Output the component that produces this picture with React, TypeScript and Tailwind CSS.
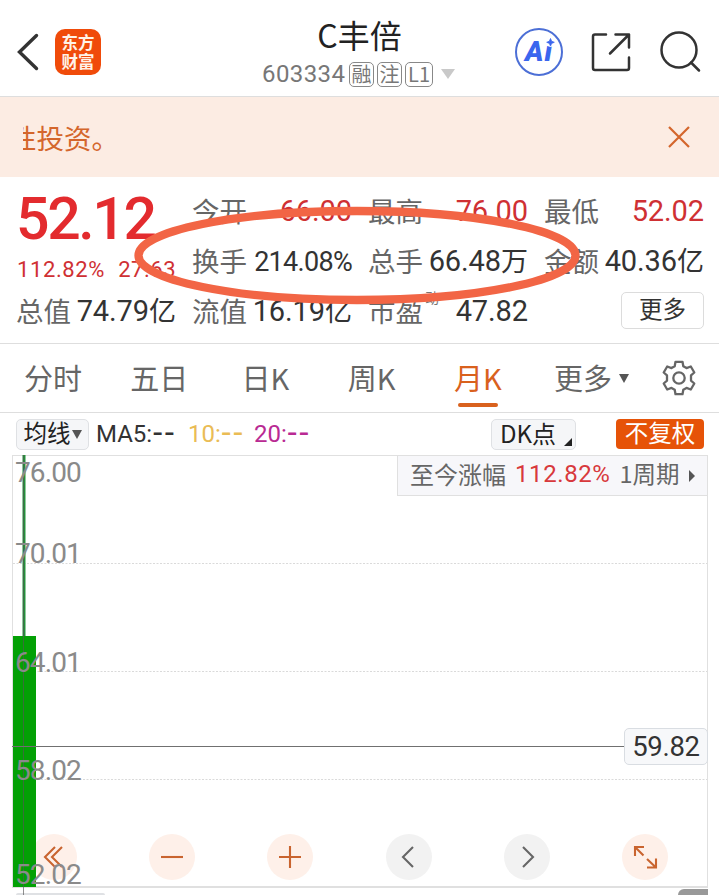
import { ReactNode } from 'react';
import clsx from 'clsx';

const tabs = ['分时', '五日', '日K', '周K', '月K'];

const axisLabels = [
  { value: '76.00', top: 'top-px' },
  { value: '70.01', top: 'top-[82px]' },
  { value: '64.01', top: 'top-[191px]' },
  { value: '58.02', top: 'top-[299px]' },
  { value: '52.02', top: 'top-[403px]' },
];

const num = "font-['Roboto','Noto_Sans_CJK_SC',sans-serif]";

function Cell({ label, children, sup }: { label: string; children: ReactNode; sup?: string }) {
  return (
    <div className="relative flex h-[50px] items-center justify-between whitespace-nowrap">
      <span className="-ml-px pb-px text-[27.5px] text-[#666]">{label}</span>
      {sup && <span className="absolute left-[56px] top-[2px] text-[14px] leading-[18px] text-[#777]">{sup}</span>}
      <span className={clsx(num, 'flex items-center pt-[2px]')}>{children}</span>
    </div>
  );
}

function Digits({ children, red, unit }: { children: string; red?: boolean; unit?: string }) {
  return (
    <>
      <span className={clsx('text-[29px] tracking-[-0.1px]', red ? 'text-[#cf3033]' : 'text-[#333]')}>{children}</span>
      {unit && <span className="text-[27px] text-[#333]">{unit}</span>}
    </>
  );
}

function StockTag({ children, wide }: { children: string; wide?: boolean }) {
  return (
    <span className={clsx('flex h-[25px] items-center justify-center rounded-[5px] border border-[#888] text-[20px] leading-none text-[#777]', wide ? 'w-[28px]' : 'w-[25px]')}>
      {children}
    </span>
  );
}

function Header() {
  return (
    <header className="flex h-[97px] shrink-0 items-center border-b border-[#dedede] pb-2">
      <svg className="ml-4 mt-[15px] h-10 w-6 shrink-0" viewBox="0 0 24 40" fill="none" stroke="#333" strokeWidth="3.4" strokeLinecap="round">
        <path d="M20.5 3.5 3.5 20l17 16.5" />
      </svg>
      <div className="ml-[15px] mt-[15px] flex h-[46px] w-[46px] shrink-0 flex-col items-center justify-center rounded-[10px] bg-[#f04b0a] text-[16.5px] font-bold leading-[19px] text-[#fff3e8]">
        <span>东方</span>
        <span>财富</span>
      </div>
      <div className="ml-[161px] mt-[14px] flex w-[193px] shrink-0 flex-col items-center">
        <h1 className="pl-[2px] text-[32px] leading-[38px] text-[#222]">C丰倍</h1>
        <div className="mt-[2px] flex h-[32px] w-full items-center">
          <span className={clsx(num, 'w-[87px] pt-[6px] text-[24px] tracking-[0.4px] text-[#777]')}>603334</span>
          <div className="flex gap-[3px] pt-[6px]">
            <StockTag>融</StockTag>
            <StockTag>注</StockTag>
            <StockTag wide>L1</StockTag>
          </div>
          <svg className="ml-auto mt-[6px] h-[10px] w-[14px]" viewBox="0 0 14 10"><path d="M0 0h14L7 10z" fill="#c9c9c9" /></svg>
        </div>
      </div>
      <div className="relative ml-[60px] mt-[15px] flex h-[48px] w-[48px] shrink-0 items-center justify-center rounded-full border-[2.5px] border-[#4c6fd6]">
        <span className="font-['Roboto',sans-serif] text-[28px] font-black italic leading-none tracking-[1px] text-[#3b66ee]">Ai</span>
        <svg className="absolute left-[27px] top-[6px] h-[11px] w-[12px]" viewBox="0 0 12 11">
          <circle cx="6.5" cy="6.3" r="4.7" fill="#fff" />
          <path d="M6.5 2.5 7.6 5.2 10.3 6.3 7.6 7.4 6.5 10.1 5.4 7.4 2.7 6.3 5.4 5.2z" fill="#3b66ee" stroke="#3b66ee" strokeWidth=".8" />
        </svg>
      </div>
      <svg className="ml-[28px] mt-[15px] h-[40px] w-[40px] shrink-0" viewBox="0 0 40 40" fill="none" stroke="#333" strokeWidth="2.5" strokeLinecap="round" strokeLinejoin="round">
        <path d="M15 2.5H4Q2 2.5 2 4.5V36Q2 38 4 38H36Q38 38 38 36V25.5M24.5 2.5H38V15.5M38 2.5 19 21.5" />
      </svg>
      <svg className="ml-[28px] mt-[15px] h-[42px] w-[42px] shrink-0" viewBox="0 0 42 42" fill="none" stroke="#333" strokeWidth="2.5" strokeLinecap="round">
        <circle cx="20" cy="19" r="17.5" />
        <path d="m32 31.5 8 8" />
      </svg>
    </header>
  );
}

function Quote() {
  return (
    <section className="relative grid h-[167px] shrink-0 grid-cols-[repeat(4,159px)] gap-x-[17px] border-b border-[#dedede] pl-[17px] pt-[9px]">
      <div className={num}>
        <div className="-ml-px h-[65px] pt-px text-[59px] font-medium leading-[64px] tracking-[-2.4px] text-[#e32b2e]">52.12</div>
        <div className="mt-[3px] flex h-[32px] items-center justify-between pb-[2px] text-[22px] text-[#cf3033]">
          <span className="tracking-[0.6px]">112.82%</span>
          <span className="tracking-[0.5px]">27.63</span>
        </div>
        <div className="font-['Noto_Sans_CJK_SC',sans-serif]">
          <Cell label="总值"><Digits unit="亿">74.79</Digits></Cell>
        </div>
      </div>
      <div>
        <Cell label="今开"><Digits red>66.00</Digits></Cell>
        <Cell label="换手"><span className="text-[27px] tracking-[-0.7px] text-[#333]">214.08%</span></Cell>
        <Cell label="流值"><Digits unit="亿">16.19</Digits></Cell>
      </div>
      <div>
        <Cell label="最高"><Digits red>76.00</Digits></Cell>
        <Cell label="总手"><Digits unit="万">66.48</Digits></Cell>
        <Cell label="市盈" sup="动"><Digits>47.82</Digits></Cell>
      </div>
      <div>
        <Cell label="最低"><Digits red>52.02</Digits></Cell>
        <Cell label="金额"><Digits unit="亿">40.36</Digits></Cell>
        <button className="ml-auto mt-[6px] flex h-[37px] w-[83px] items-center justify-center rounded-[5px] border border-[#dcdcdc] pb-[3px] text-[23.5px] leading-none text-[#333]">更多</button>
      </div>
      <svg className="pointer-events-none absolute left-[130px] top-[26px] h-[106px] w-[454px]" viewBox="0 0 454 106" fill="none">
        <ellipse cx="227" cy="52.5" rx="218.5" ry="44.5" stroke="#f26545" strokeWidth="8.3" />
      </svg>
    </section>
  );
}

function Tabs() {
  return (
    <nav className="flex h-[69px] shrink-0 items-center border-b border-[#dedede] text-[29px] text-[#666]">
      {tabs.map((t) => (
        <div key={t} className={clsx('relative flex h-full w-[106.2px] items-center justify-center', t === '月K' && 'text-[#d9611d]')}>
          {t}
          {t === '月K' && <span className="absolute bottom-[5px] h-1 w-10 rounded-full bg-[#d9611d]" />}
        </div>
      ))}
      <div className="ml-[23px] flex items-center gap-[7px]">
        更多
        <svg className="h-[9px] w-[10px]" viewBox="0 0 10 9"><path d="M0 0h10L5 9z" fill="#555" /></svg>
      </div>
      <svg className="ml-[32px] h-[36px] w-[36px]" viewBox="0 0 36 36" fill="none" stroke="#666" strokeWidth="2.3" strokeLinejoin="round">
        <path d="M14.5 1.8h7l.8 4.4 3.2 1.9 4.3-1.6 3.5 6-3.3 2.9v5.2l3.3 2.9-3.5 6-4.3-1.6-3.2 1.9-.8 4.4h-7l-.8-4.4-3.2-1.9-4.3 1.6-3.5-6L6 20.6v-5.2l-3.3-2.9 3.5-6 4.3 1.6 3.2-1.9z" />
        <circle cx="18" cy="18" r="5.7" />
      </svg>
    </nav>
  );
}

function Dashes() {
  return <span className="font-['DejaVu_Sans',sans-serif] text-[30px] leading-[20px] tracking-[1px]">--</span>;
}

function Indicators() {
  return (
    <div className="flex h-[42px] shrink-0 items-center pl-4 pr-[15px] text-[24px] leading-none">
      <div className="flex h-[31px] w-[73px] items-center justify-center rounded-[5px] border border-[#dfe1e4] bg-[#f5f6f8] pb-[3px] text-[23.5px] text-[#222]">
        均线
        <svg className="ml-px mt-[3px] h-[9px] w-[10px]" viewBox="0 0 10 9"><path d="M0 0h10L5 9z" fill="#555" /></svg>
      </div>
      <div className={clsx(num, 'ml-[7px] flex whitespace-nowrap')}>
        <span className="w-[92px] text-[#333]">MA5:<Dashes /></span>
        <span className="w-[66px] text-[#eabc55]">10:<Dashes /></span>
        <span className="text-[#b92a93]">20:<Dashes /></span>
      </div>
      <div className="relative ml-auto flex h-[31px] w-[85px] items-center rounded-[5px] border border-[#dfe1e4] bg-[#f5f6f8] pb-[3px] pl-[8px] text-[24px] text-[#222]">
        DK点
        <svg className="absolute bottom-[3px] right-[3px] h-2 w-2" viewBox="0 0 8 8"><path d="M8 0v8H0z" fill="#222" /></svg>
      </div>
      <div className="ml-[40px] flex h-[30px] w-[88px] items-center justify-center rounded-[4px] bg-[#e65308] pb-[2px] text-[23.5px] text-white">不复权</div>
    </div>
  );
}

function Round({ children, gray }: { children: ReactNode; gray?: boolean }) {
  return (
    <button className={clsx('flex h-[46px] w-[46px] items-center justify-center rounded-full', gray ? 'bg-[#f2f2f2] text-[#666]' : 'bg-[#fef0e9] text-[#c9642f]')}>
      <svg className="h-[46px] w-[46px]" viewBox="0 0 46 46" fill="none" stroke="currentColor" strokeWidth="2.1">{children}</svg>
    </button>
  );
}

function Chart() {
  return (
    <div className="relative ml-[12px] h-[433px] w-[696px] shrink-0 border border-b-2 border-[#e0e0e0]">
      <div className="absolute left-[18px] top-[378px] flex gap-[72.2px]">
        <Round><path d="M24 13 14 23l10 10M31 13 21 23l10 10" /></Round>
        <Round><path d="M12 23h22" /></Round>
        <Round><path d="M12 23h22M23 12v22" /></Round>
        <Round gray><path d="M27 13 17 23l10 10" /></Round>
        <Round gray><path d="m19 13 10 10-10 10" /></Round>
        <Round><path d="M22 13h-9v9M13 13l8.5 8.5M25 33.5h9v-9M34 33.5l-9-8.5" /></Round>
      </div>
      <svg className="pointer-events-none absolute -left-px -top-px h-[440px] w-[696px]" viewBox="0 0 696 440" fill="none">
        <path d="M1 108.5h694M1 216.5h694M1 324.5h694" stroke="#dadada" strokeDasharray="2 1.5" />
        <path d="M12 0v181" stroke="#23913a" strokeWidth="3" />
        <path d="M1 181h23v251H1z" fill="#03a005" />
        <path d="M11.5 0v440" stroke="#555" strokeOpacity=".65" />
        <path d="M0 291.5h613" stroke="#707070" />
      </svg>
      {axisLabels.map((l) => (
        <span key={l.value} className={clsx(num, 'absolute left-[2px] text-[28px] leading-[32px] tracking-[-0.9px] text-[#8a8a8a]', l.top)}>{l.value}</span>
      ))}
      <div className="absolute -right-px -top-px flex h-[41px] w-[311px] items-center whitespace-nowrap border border-[#e0e0e0] bg-[#f7f7fa] pb-[3px] pl-[12px] text-[24px] text-[#666]">
        至今涨幅
        <span className={clsx(num, 'ml-[9px] tracking-[0.6px] text-[#d8393c]')}>112.82%</span>
        <span className="ml-[9px] text-[23.5px]">1周期</span>
        <svg className="ml-[9px] mt-[3px] h-[12px] w-[6px]" viewBox="0 0 6 12"><path d="M0 0v12l6-6z" fill="#555" /></svg>
      </div>
      <div className={clsx(num, 'absolute -right-px top-[272px] flex h-[37px] w-[84px] items-center justify-center rounded-[5px] border border-[#d9dde2] bg-[#f7f8fa] text-[27.5px] tracking-[-0.3px] text-[#333]')}>59.82</div>
    </div>
  );
}

export default function App() {
  return (
    <div className="flex h-[895px] w-[719px] flex-col overflow-hidden bg-white font-['Noto_Sans_CJK_SC',sans-serif] font-normal">
      <Header />
      <div className="flex h-[80px] shrink-0 items-center justify-between bg-[#fcece3] pl-[23px] pr-[29px] text-[#d4662c]">
        <div className="overflow-hidden whitespace-nowrap pt-[2px]">
          <span className="ml-[-14px] text-[27.5px]">性投资。</span>
        </div>
        <svg className="h-[22px] w-[22px]" viewBox="0 0 22 22" fill="none" stroke="currentColor" strokeWidth="2.2"><path d="m1 1 20 20M21 1 1 21" /></svg>
      </div>
      <Quote />
      <Tabs />
      <Indicators />
      <Chart />
      <div className="flex h-[7px] shrink-0 items-end justify-between overflow-hidden pl-4 pr-[11px]">
        <div className="h-[2px] w-[89px] rounded-t-[4px] bg-[#dfe1e4]" />
        <div className="h-[6px] w-[30px] rounded-tl-[6px] bg-[#999]" />
      </div>
    </div>
  );
}
